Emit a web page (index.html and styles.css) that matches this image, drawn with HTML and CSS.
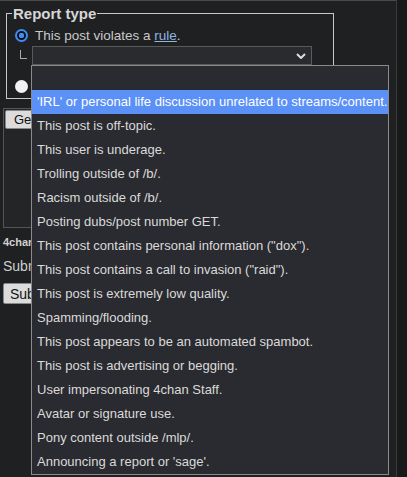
FILE: index.html
```html
<!DOCTYPE html>
<html>
<head>
<meta charset="utf-8">
<link rel="stylesheet" href="styles.css">
</head>
<body>
<div class="page">
  <div class="main">
    <fieldset class="report">
      <legend>Report type</legend>
      <div class="row">
        <span class="radio checked"></span>
        <span class="label">This post violates a <a href="#">rule</a>.</span>
      </div>
      <div class="row sub">
        <span class="elbow"></span>
        <div class="select"><svg class="chev" width="10" height="6" viewBox="0 0 10 6"><path d="M1 1 L5 5 L9 1" fill="none" stroke="#ddd" stroke-width="2"/></svg></div>
      </div>
      <div class="row third">
        <span class="radio"></span>
        <span class="label">This post contains illegal content.</span>
      </div>
    </fieldset>
    <div class="captcha">
      <button class="btn">Get Captcha</button>
    </div>
    <div class="note">4chan Pass users can bypass this verification.</div>
    <div class="submitlabel">Submit report</div>
    <button class="btn submit">Submit</button>

    <ul class="menu">
      <li class="empty"></li>
      <li class="sel">'IRL' or personal life discussion unrelated to streams/content.</li>
      <li>This post is off-topic.</li>
      <li>This user is underage.</li>
      <li>Trolling outside of /b/.</li>
      <li>Racism outside of /b/.</li>
      <li>Posting dubs/post number GET.</li>
      <li>This post contains personal information ("dox").</li>
      <li>This post contains a call to invasion ("raid").</li>
      <li>This post is extremely low quality.</li>
      <li>Spamming/flooding.</li>
      <li>This post appears to be an automated spambot.</li>
      <li>This post is advertising or begging.</li>
      <li>User impersonating 4chan Staff.</li>
      <li>Avatar or signature use.</li>
      <li>Pony content outside /mlp/.</li>
      <li>Announcing a report or 'sage'.</li>
    </ul>
  </div>
  <div class="side"></div>
</div>
</body>
</html>
```
FILE: styles.css
```css
html, body {
  margin: 0;
  padding: 0;
  background: #1d1e20;
  font-family: "Liberation Sans", Arial, sans-serif;
  color: #c9c9c9;
}
.page {
  display: flex;
  height: 477px;
  overflow: hidden;
}
.main {
  position: relative;
  width: 397px;
  border-top: 1px solid #4a4a4a;
  border-right: 1px solid #3a3a3a;
  background: #1f2022;
  padding: 4px 0 0 3px;
  box-sizing: border-box;
}
.side {
  flex: 1;
  background: #18191b;
}
.report {
  margin: 0 0 0 3px;
  width: 328px;
  height: 94px;
  box-sizing: border-box;
  border: 1px solid #c8c8c8;
  padding: 0 8px 0 8px;
}
.report legend {
  font-weight: bold;
  font-size: 15px;
  color: #d6d6d6;
  padding: 0 1px;
  margin-left: -3px;
  line-height: 17px;
}
.row {
  display: flex;
  align-items: center;
  gap: 7px;
  height: 16px;
  margin-top: 5px;
  font-size: 13.5px;
}
.row a {
  color: #8fb5e0;
}
.radio {
  width: 13px;
  height: 13px;
  border-radius: 50%;
  background: #f2f2f2;
  box-sizing: border-box;
  flex: none;
}
.radio.checked {
  border: 2px solid #3f8cf2;
  background: radial-gradient(circle, #3f8cf2 0 2.5px, #111 3px);
}
.row.sub {
  margin-top: 3px;
  height: 19px;
  gap: 5px;
  padding-left: 5px;
}
.elbow {
  width: 6px;
  height: 8px;
  border-left: 1px solid #aaa;
  border-bottom: 1px solid #aaa;
  margin-top: -2px;
}
.select {
  width: 280px;
  height: 19px;
  box-sizing: border-box;
  background: #2a2b2f;
  border: 1px solid #5a5a5a;
  display: flex;
  align-items: center;
  justify-content: flex-end;
  padding-right: 5px;
}
.row.third {
  margin-top: 13px;
}
.captcha {
  margin-top: 9px;
  width: 326px;
  height: 120px;
  box-sizing: border-box;
  border: 1px solid #555;
  background: #242527;
  padding: 1px;
}
.btn {
  font-family: "Liberation Sans", Arial, sans-serif;
  font-size: 13px;
  background: #dcdcdc;
  color: #111;
  border: 1px solid #888;
  border-radius: 2px;
  height: 19px;
  padding: 0 8px;
}
.note {
  margin-top: 8px;
  font-size: 11px;
  font-weight: bold;
  color: #d0d0d0;
}
.submitlabel {
  margin-top: 10px;
  font-size: 14px;
  color: #cfcfcf;
}
.submit {
  margin-top: 9px;
  height: 21px;
  font-size: 14px;
  padding: 0 6px;
}
.menu {
  position: absolute;
  left: 31px;
  top: 64px;
  width: 358px;
  margin: 0;
  padding: 0;
  list-style: none;
  background: #2a2b30;
  border: 1px solid #8a8a8a;
  box-sizing: border-box;
}
.menu li {
  height: 24px;
  line-height: 24px;
  font-size: 13px;
  padding-left: 5px;
  color: #dadada;
  white-space: nowrap;
}
.menu li.sel {
  background: #5b90f7;
  color: #fff;
}
```
